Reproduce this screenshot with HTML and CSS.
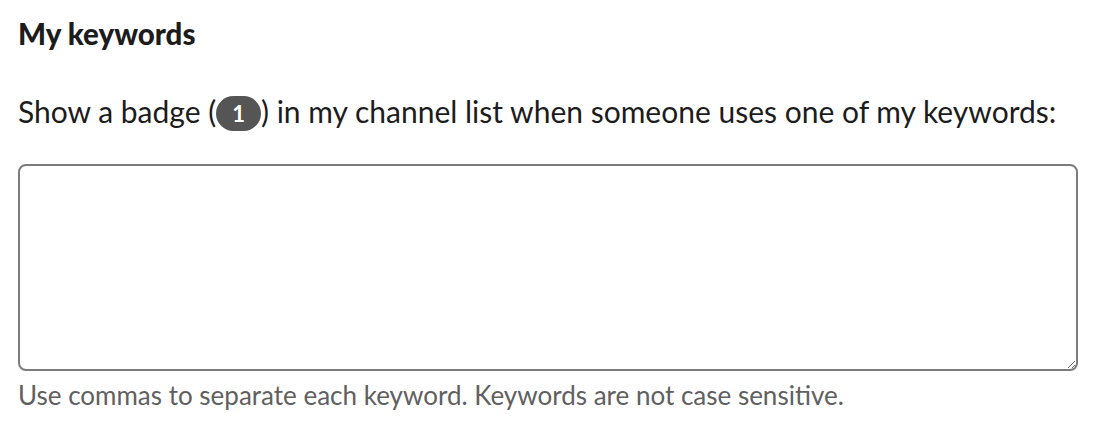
FILE: index.html
```html
<!DOCTYPE html>
<html lang="en">
<head>
    <meta charset="UTF-8">
    <title>My keywords</title>
    <link rel="stylesheet" href="styles.css">
</head>
<body>
    <div class="section">
        <h2 class="section-title">My keywords</h2>
        <label class="field-label" for="keywords">
            Show a badge (<span class="badge">1</span>) in my channel list when someone uses one of my keywords:
        </label>
        <textarea id="keywords" class="keywords-input"></textarea>
        <p class="hint">Use commas to separate each keyword. Keywords are not case sensitive.</p>
    </div>
</body>
</html>
```

FILE: styles.css
```css
body {
    margin: 0;
    font-family: 'Lato', 'Liberation Sans', sans-serif;
    color: #1d1c1d;
    background: #fff;
}

.section {
    padding: 16px 28px 0 18px;
}

.section-title {
    font-size: 29.5px;
    font-weight: 900;
    margin: 0 0 39px;
    line-height: 36px;
}

.field-label {
    display: block;
    font-size: 30px;
    line-height: 40px;
    margin-bottom: 33px;
}

.badge {
    display: inline-block;
    background: #555;
    color: #fff;
    font-size: 22px;
    font-weight: 700;
    line-height: 35px;
    padding: 0 16px;
    border-radius: 18px;
    vertical-align: 1px;
}

.keywords-input {
    display: block;
    box-sizing: border-box;
    width: 100%;
    height: 207px;
    border: 2px solid #7c7c7c;
    border-radius: 8px;
    font-family: inherit;
    font-size: 26px;
    resize: vertical;
    margin: 0;
}

.hint {
    margin: 6px 0 0;
    font-size: 26px;
    line-height: 36px;
    color: #616061;
}
```
